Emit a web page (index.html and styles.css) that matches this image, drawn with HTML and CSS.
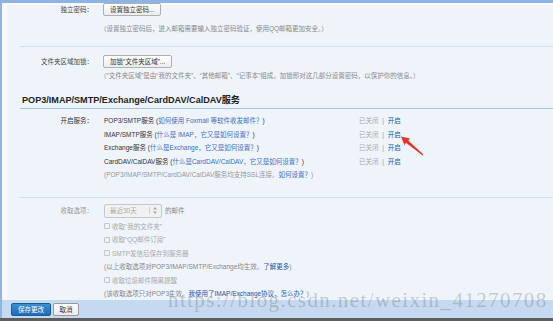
FILE: index.html
```html
<!DOCTYPE html>
<html lang="zh-CN">
  <head>
    <meta charset="UTF-8" />
    <meta name="viewport" content="width=device-width, initial-scale=1.0" />
    <title>账户设置</title>
    <link rel="stylesheet" href="styles.css">
  </head>
  <body>
    <div class="wrap">
      <div class="main">
        <!-- 独立密码 -->
        <div class="section sec-pwd">
          <div class="form-row">
            <div class="label">独立密码：</div>
            <div class="value"><button class="btn">设置独立密码...</button></div>
          </div>
          <div class="form-row hint-row">
            <div class="label"></div>
            <div class="value hint">（设置独立密码后，进入邮箱需要输入独立密码验证，使用QQ邮箱更加安全。）</div>
          </div>
        </div>

        <!-- 文件夹区域加锁 -->
        <div class="section sec-lock">
          <div class="form-row">
            <div class="label">文件夹区域加锁：</div>
            <div class="value"><button class="btn">加锁“文件夹区域”...</button></div>
          </div>
          <div class="form-row">
            <div class="label"></div>
            <div class="value hint">（“文件夹区域”是由“我的文件夹”、“其他邮箱”、“记事本”组成。加锁即对这几部分设置密码，以保护你的信息。）</div>
          </div>
        </div>

        <!-- 服务 -->
        <h3 class="sec-title">POP3/IMAP/SMTP/Exchange/CardDAV/CalDAV服务</h3>
        <div class="section sec-service">
          <div class="form-row">
            <div class="label">开启服务：</div>
            <div class="value">
              <div class="svc">
                <span>POP3/SMTP服务 (<a href="#">如何使用 Foxmail 等软件收发邮件？</a>)</span>
                <span class="state">已关闭 <i>|</i> <a href="#">开启</a></span>
              </div>
              <div class="svc">
                <span>IMAP/SMTP服务 (<a href="#">什么是 IMAP，它又是如何设置？</a>)</span>
                <span class="state">已关闭 <i>|</i> <a href="#">开启</a></span>
              </div>
              <div class="svc">
                <span>Exchange服务 (<a href="#">什么是Exchange，它又是如何设置？</a>)</span>
                <span class="state">已关闭 <i>|</i> <a href="#">开启</a></span>
              </div>
              <div class="svc">
                <span>CardDAV/CalDAV服务 (<a href="#">什么是CardDAV/CalDAV，它又是如何设置？</a>)</span>
                <span class="state">已关闭 <i>|</i> <a href="#">开启</a></span>
              </div>
              <div class="svc note">(POP3/IMAP/SMTP/CardDAV/CalDAV服务均支持SSL连接。<a href="#">如何设置？</a>)</div>
            </div>
          </div>
        </div>

        <!-- 收取选项 -->
        <div class="section sec-fetch">
          <div class="form-row">
            <div class="label">收取选项：</div>
            <div class="value">
              <div class="select-row">
                <div class="select">
                  <span>最近30天</span>
                  <svg class="arrows" width="4" height="7" viewBox="0 0 4 7"><path d="M2 0 4 2.6H0Z M2 7 4 4.4H0Z" fill="#aaa"/></svg>
                </div>
                <span>的邮件</span>
              </div>
              <div class="opt"><span class="check"></span>收取“我的文件夹”</div>
              <div class="opt"><span class="check"></span>收取“QQ邮件订阅”</div>
              <div class="opt"><span class="check"></span>SMTP发信后保存到服务器</div>
              <div class="opt note">(以上收取选项对POP3/IMAP/SMTP/Exchange均生效。<a href="#">了解更多</a>)</div>
              <div class="opt"><span class="check"></span>收取垃圾邮件隔离提醒</div>
              <div class="opt note">(该收取选项只对POP3生效。<a href="#">我使用了IMAP/Exchange协议，怎么办？</a>)</div>
            </div>
          </div>
        </div>
      </div>

      <!-- 底部按钮 -->
      <div class="footer">
        <button class="btn btn-save">保存更改</button>
        <button class="btn btn-cancel">取消</button>
      </div>
    </div>
    <div class="edge"></div>

    <!-- 红色箭头标注 -->
    <svg class="mark" width="553" height="321" viewBox="0 0 553 321">
      <polygon points="401,136.5 410,138.6 408.2,140.6 423.4,154.6 422.6,155.4 406,142.8 404.4,145" fill="#e8312b"/>
    </svg>

    <div class="watermark">https://blog.csdn.net/weixin_41270708</div>
  </body>
</html>
```

FILE: styles.css
```css
* {
  margin: 0;
  padding: 0;
  box-sizing: border-box;
}

body {
  font-family: "Liberation Sans", "Noto Sans CJK SC", sans-serif;
  font-size: 6.5px;
  color: #333;
  background-color: #eff4fb;
  width: 553px;
  height: 321px;
  overflow: hidden;
  position: relative;
}

a {
  color: #3d6fc1;
  text-decoration: none;
}

.wrap {
  height: 318px;
  border-top: 3px solid #8db4e4;
  border-left: 2px solid #8db4e4;
  display: flex;
  flex-direction: column;
}

.main {
  height: 297px;
  overflow: hidden;
  border-left: 5px solid #f7f9fd;
  background: linear-gradient(#f9fbfe 0 2px, #eff4fb 2px);
}

.section {
  margin-left: 13px;
}

.form-row {
  display: grid;
  grid-template-columns: 73px 1fr;
  column-gap: 10px;
  line-height: 13.5px;
}

.label {
  text-align: right;
  color: #444;
}

.hint {
  color: #8a8a8a;
  margin-left: -3px;
}

.sec-pwd {
  padding-bottom: 11px;
  border-bottom: 1px solid #d4e0f0;
}

.sec-pwd .hint-row {
  margin-top: 5px;
}

.sec-lock {
  padding-top: 8px;
}

.btn {
  font-family: inherit;
  font-size: 6.5px;
  height: 13px;
  padding: 0 6px;
  color: #333;
  background: linear-gradient(#ffffff, #ececec);
  border: 1px solid #b0b0b0;
  border-radius: 2px;
  line-height: 11px;
  vertical-align: top;
}

.sec-title {
  margin: 12px 0 0 13px;
  padding: 0 0 2px 2px;
  font-size: 9.1px;
  line-height: 12px;
  font-weight: bold;
  color: #222;
  border-bottom: 1px solid #a3c2ea;
}

.sec-service {
  padding-top: 5px;
  padding-bottom: 15px;
  border-bottom: 1px solid #d4e0f0;
}

.sec-service .label {
  color: #333;
}

.svc {
  display: flex;
  padding-left: 1px;
}

.svc > span:first-child {
  width: 255px;
}

.state {
  color: #aaa;
}

.state i {
  font-style: normal;
  color: #999;
  margin: 0 2px;
}

.state a {
  color: #2257a8;
}

.note {
  color: #999;
}

.sec-fetch {
  padding-top: 6px;
}

.sec-fetch .label {
  color: #999;
  line-height: 14px;
}

.select-row {
  display: flex;
  align-items: center;
  gap: 3px;
  height: 14px;
  color: #888;
  margin-left: 1px;
  margin-bottom: 2px;
}

.select {
  width: 58px;
  height: 14px;
  border: 1px solid #c8c8c8;
  border-radius: 2px;
  background: #f1f1f1;
  display: flex;
  align-items: center;
  padding-left: 5px;
  color: #aaa;
}

.select span {
  flex: 1;
}

.select .arrows {
  margin-right: 4px;
  padding-left: 3px;
  box-sizing: content-box;
  border-left: 1px solid #d0d0d0;
  height: 7px;
}

.opt {
  display: flex;
  align-items: center;
  height: 13.5px;
  color: #aaa;
  padding-left: 1px;
}

.opt.note {
  color: #888;
}

.opt.note a {
  color: #2257a8;
}

.check {
  width: 6px;
  height: 6px;
  border: 1px solid #c6c6c6;
  border-radius: 1px;
  background: #f2f2f2;
  margin-right: 2px;
}

.footer {
  height: 18px;
  background-color: #c5d9f0;
  padding: 3px 0 0 9px;
  display: flex;
  gap: 2px;
}

.btn-save {
  width: 40px;
  padding: 0;
  color: #fff;
  background: linear-gradient(#3b8dd6, #1f6cb6);
  border-color: #1a5c9c;
}

.btn-cancel {
  width: 26px;
  padding: 0;
  background: linear-gradient(#ffffff, #eaeaea);
  border-color: #9a9a9a;
}

.edge {
  height: 3px;
  background-color: #5d5d5d;
}

.mark {
  position: absolute;
  left: 0;
  top: 0;
  pointer-events: none;
}

.watermark {
  position: absolute;
  left: 168px;
  top: 288px;
  font-family: "Liberation Serif", serif;
  font-size: 21px;
  letter-spacing: 1.4px;
  color: rgba(110, 110, 110, 0.33);
  white-space: nowrap;
  pointer-events: none;
}
```
